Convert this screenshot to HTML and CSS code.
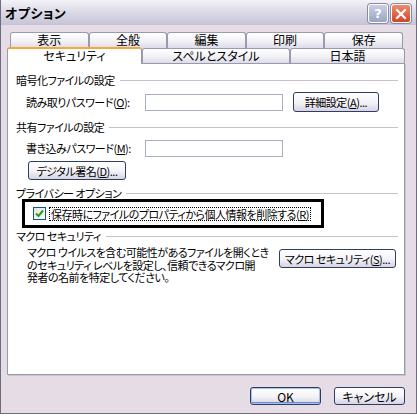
FILE: index.html
```html
<!DOCTYPE html>
<html lang="ja">
<head>
  <meta charset="UTF-8">
  <title>オプション</title>
  <link rel="stylesheet" href="styles.css">
</head>
<body>

<div class="window">

  <!-- タイトルバー -->
  <div class="titlebar">
    <span class="title">オプション</span>
    <div class="caption-buttons">
      <span class="cap-btn help">?</span>
      <span class="cap-btn close">
        <svg width="12" height="12" viewBox="0 0 12 12"><path d="M2 2 L10 10 M10 2 L2 10" stroke="#fff" stroke-width="2.2" stroke-linecap="square"/></svg>
      </span>
    </div>
  </div>

  <div class="dialog">

    <!-- タブ -->
    <div class="tab-row back">
      <div class="tab">表示</div>
      <div class="tab">全般</div>
      <div class="tab">編集</div>
      <div class="tab">印刷</div>
      <div class="tab">保存</div>
    </div>
    <div class="tab-row front">
      <div class="tab selected w-sec">セキュリティ</div>
      <div class="tab w-spell">スペルとスタイル</div>
      <div class="tab w-jp">日本語</div>
    </div>

    <!-- セキュリティ パネル -->
    <div class="panel">

      <div class="group-title first"><span>暗号化ファイルの設定</span><i></i></div>
      <div class="field-row first-row">
        <label>読み取りパスワード(<u>O</u>):</label>
        <span class="textbox"></span>
        <span class="btn btn-detail">詳細設定(<u>A</u>)...</span>
      </div>

      <div class="group-title shared"><span>共有ファイルの設定</span><i></i></div>
      <div class="field-row second-row">
        <label>書き込みパスワード(<u>M</u>):</label>
        <span class="textbox"></span>
      </div>
      <span class="btn btn-sign">デジタル署名(<u>D</u>)...</span>

      <div class="group-title privacy"><span>プライバシー オプション</span><i></i></div>
      <div class="highlight">
        <span class="checkbox">
          <svg width="9" height="9" viewBox="0 0 9 9"><path d="M1 4.5 L3.5 7 L8 1.5" fill="none" stroke="#21a121" stroke-width="2"/></svg>
        </span>
        <span class="focus-label">保存時にファイルのプロパティから個人情報を削除する(<u>R</u>)</span>
      </div>

      <div class="group-title macro"><span>マクロ セキュリティ</span><i></i></div>
      <div class="macro-row">
        <p>マクロ ウイルスを含む可能性があるファイルを開くとき<br>のセキュリティ レベルを設定し、信頼できるマクロ開<br>発者の名前を特定してください。</p>
        <span class="btn btn-macro">マクロ セキュリティ(<u>S</u>)...</span>
      </div>

    </div>

    <!-- OK / キャンセル -->
    <div class="actions">
      <span class="btn btn-action default">OK</span>
      <span class="btn btn-action">キャンセル</span>
    </div>

  </div>
</div>

</body>
</html>
```

FILE: styles.css
```css
body {
  margin: 0;
  background: #fff;
  font-family: "Noto Sans CJK JP", sans-serif;
  font-size: 11px;
  font-feature-settings: "palt";
  color: #000;
}

.window {
  width: 417px;
  height: 414px;
  box-sizing: border-box;
  border: 1px solid #6e6d80;
  border-top: none;
  background: #e6dce6;
}

/* タイトルバー */
.titlebar {
  height: 25px;
  display: flex;
  align-items: center;
  justify-content: space-between;
  padding: 0 5px 0 4px;
  background: linear-gradient(#f4f3f8, #dcdbe7 45%, #c6c4d6);
}
.title { font-weight: bold; font-size: 13px; letter-spacing: 0.5px; }
.caption-buttons { display: flex; gap: 3px; margin-top: 2px; }
.cap-btn {
  width: 20px;
  height: 19px;
  box-sizing: border-box;
  border: 1px solid #fff;
  border-radius: 3px;
  display: flex;
  align-items: center;
  justify-content: center;
  box-shadow: 0 0 0 1px #8a8aa0;
}
.cap-btn.help {
  background: linear-gradient(#c9d0e4, #9aa4c2);
  color: #fff;
  font-weight: bold;
  font-family: "DejaVu Sans", sans-serif;
  font-size: 13px;
}
.cap-btn.close { background: linear-gradient(#f08a6c, #d24426); }

.dialog { padding: 7px 10px 0 6px; }

/* タブ */
.tab-row { display: flex; font-size: 12px; }
.tab-row.back { margin-left: 3px; width: 393px; }
.tab-row.back .tab { flex: 1; height: 16px; }
.tab-row.front { width: 398px; position: relative; z-index: 1; }
.tab {
  box-sizing: border-box;
  height: 15px;
  border: 1px solid #9a9aae;
  border-bottom: none;
  border-radius: 3px 3px 0 0;
  background: linear-gradient(#fff, #f2f1f6 55%, #dddce8);
  text-align: center;
  line-height: 14px;
}
.tab.selected {
  height: 17px;
  margin-top: -1px;
  margin-bottom: -1px;
  border-top: 2px solid #f3a93a;
  background: #fff;
  line-height: 14px;
}
.w-sec { width: 135px; }
.w-spell { width: 148px; }
.w-jp { width: 115px; }

/* パネル */
.panel {
  width: 398px;
  height: 312px;
  box-sizing: border-box;
  border: 1px solid #9a9aae;
  background: #fff;
  box-shadow: 1px 1px 0 #c8c4cc;
  padding: 0 6px 0 8px;
  letter-spacing: -0.5px;
}

.group-title {
  display: flex;
  align-items: center;
  height: 12px;
  line-height: 12px;
  white-space: nowrap;
}
.group-title i { flex: 1; height: 1px; background: #c3c1c9; margin-left: 5px; }
.group-title.first { margin-top: 10px; }
.group-title.shared { margin-top: 9px; }
.group-title.privacy { margin-top: 7px; }
.group-title.macro { margin-top: 2px; }

.field-row {
  display: flex;
  align-items: center;
  height: 20px;
  padding-left: 10px;
}
.field-row.first-row { margin-top: 6px; }
.field-row.second-row { margin-top: 5px; }
.field-row label { width: 119px; flex-shrink: 0; white-space: nowrap; }
.textbox {
  width: 138px;
  height: 17px;
  flex-shrink: 0;
  box-sizing: border-box;
  border: 1px solid #a7aec0;
  background: #fff;
}

/* ボタン */
.btn {
  display: inline-flex;
  align-items: center;
  justify-content: center;
  flex-shrink: 0;
  box-sizing: border-box;
  height: 19px;
  border: 1px solid #2f3c63;
  border-radius: 3px;
  background: linear-gradient(#fff, #f3f2f7 55%, #d6d4e2);
  white-space: nowrap;
}
.btn-detail { width: 86px; height: 20px; margin-left: 10px; }
.btn-sign { width: 98px; margin: 3px 0 0 12px; }
.btn-macro { width: 117px; margin-top: 2px; }
.btn-action { width: 71px; height: 18px; font-size: 12px; }
.btn-action.default { box-shadow: inset 0 0 0 1px #a9c0e8, inset 0 -2px 0 #6d8fd0; }

/* プライバシー */
.highlight {
  display: flex;
  align-items: center;
  width: 302px;
  height: 29px;
  box-sizing: border-box;
  margin-left: 6px;
  border: 3px solid #000;
  padding-left: 8px;
  white-space: nowrap;
}
.checkbox {
  width: 13px;
  height: 13px;
  flex-shrink: 0;
  box-sizing: border-box;
  border: 1px solid #1c5180;
  background: linear-gradient(135deg, #e4e3dd, #fff);
  display: flex;
  align-items: center;
  justify-content: center;
}
.focus-label {
  margin-left: 3px;
  border: 1px dotted #000;
  line-height: 12px;
  padding: 0 1px;
}

/* マクロ */
.macro-row { display: flex; align-items: flex-start; margin-top: 4px; }
.macro-row p {
  margin: 0 0 0 11px;
  width: 252px;
  flex-shrink: 0;
  line-height: 12.5px;
  white-space: nowrap;
}
.macro-row .btn-macro { margin-top: 3px; }

.actions {
  display: flex;
  justify-content: flex-end;
  gap: 13px;
  margin-top: 12px;
  padding-right: 1px;
}
```
